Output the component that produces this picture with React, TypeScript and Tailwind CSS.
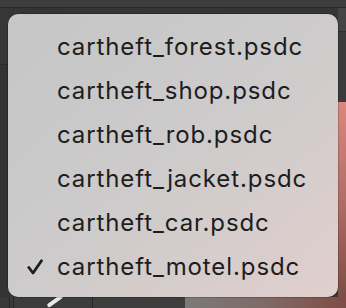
import React from "react";

const files = [
  "cartheft_forest.psdc",
  "cartheft_shop.psdc",
  "cartheft_rob.psdc",
  "cartheft_jacket.psdc",
  "cartheft_car.psdc",
  "cartheft_motel.psdc",
];

const current = "cartheft_motel.psdc";

export default function App() {
  return (
    <div className="relative w-[346px] h-[308px] overflow-hidden bg-[#343434] flex flex-col">
      {/* window chrome behind the menu */}
      <div className="h-[8px] bg-[#3e3e3e] border-b border-[#2a2a2a]" />
      <div className="flex-1 flex">
        <div className="w-[8px] flex flex-col">
          <div className="h-[57px] bg-[#363636] border-b border-[#2b2b2b]" />
          <div className="flex-1 bg-[#333333]" />
        </div>
        <div className="flex-1 bg-[#353535]" />
        <div className="w-[8px] flex flex-col">
          <div className="h-[24px] bg-[#444444] border-b border-[#2e2e2e]" />
          <div className="h-[70px] bg-[#3b3b3b]" />
          <div className="flex-1 bg-gradient-to-b from-[#d9897e] via-[#b06e66] to-[#7d4d47]" />
        </div>
      </div>
      <div className="h-[11px] flex">
        <div className="w-[10px] bg-[#383838] border-r border-[#262626]" />
        <div className="w-[4px] bg-[#3a3a3a] border-r border-[#262626]" />
        <div className="w-[79px] bg-[#3c3c3c] border-r border-[#262626] relative">
          <div className="absolute left-[32px] top-[2px] w-[18px] h-[4px] bg-[#e8e8e8] rotate-[-35deg] rounded-sm" />
        </div>
        <div className="w-[92px] bg-[#3e3e3e]" />
        <div className="flex-1 bg-gradient-to-r from-[#7a7a7a] via-[#7f6a67] to-[#7e4c45]" />
      </div>

      {/* popup menu */}
      <div className="absolute left-[8px] top-[14px] w-[330px] h-[283px] rounded-[10px] bg-gradient-to-br from-[#c6c6c6] via-[#cdcbcb] to-[#e0cfcd] shadow-[0_0_0_0.5px_rgba(0,0,0,0.35)] pt-[11px]">
        {files.map((f) => (
          <div key={f} className="h-[44px] flex items-center text-[#1d1d1d] text-[24px] tracking-[0.9px]" style={{ fontFamily: "Inter, 'Noto Sans', sans-serif" }}>
            <span className="w-[49px] pl-[19px] flex items-center">
              {f === current && (
                <svg width="16" height="16" viewBox="0 0 16 16" fill="none">
                  <path d="M1.8 8.5 L6 14 L14.5 1.8" stroke="#1d1d1d" strokeWidth="2.8" strokeLinecap="round" strokeLinejoin="round" />
                </svg>
              )}
            </span>
            <span>{f}</span>
          </div>
        ))}
      </div>
    </div>
  );
}
